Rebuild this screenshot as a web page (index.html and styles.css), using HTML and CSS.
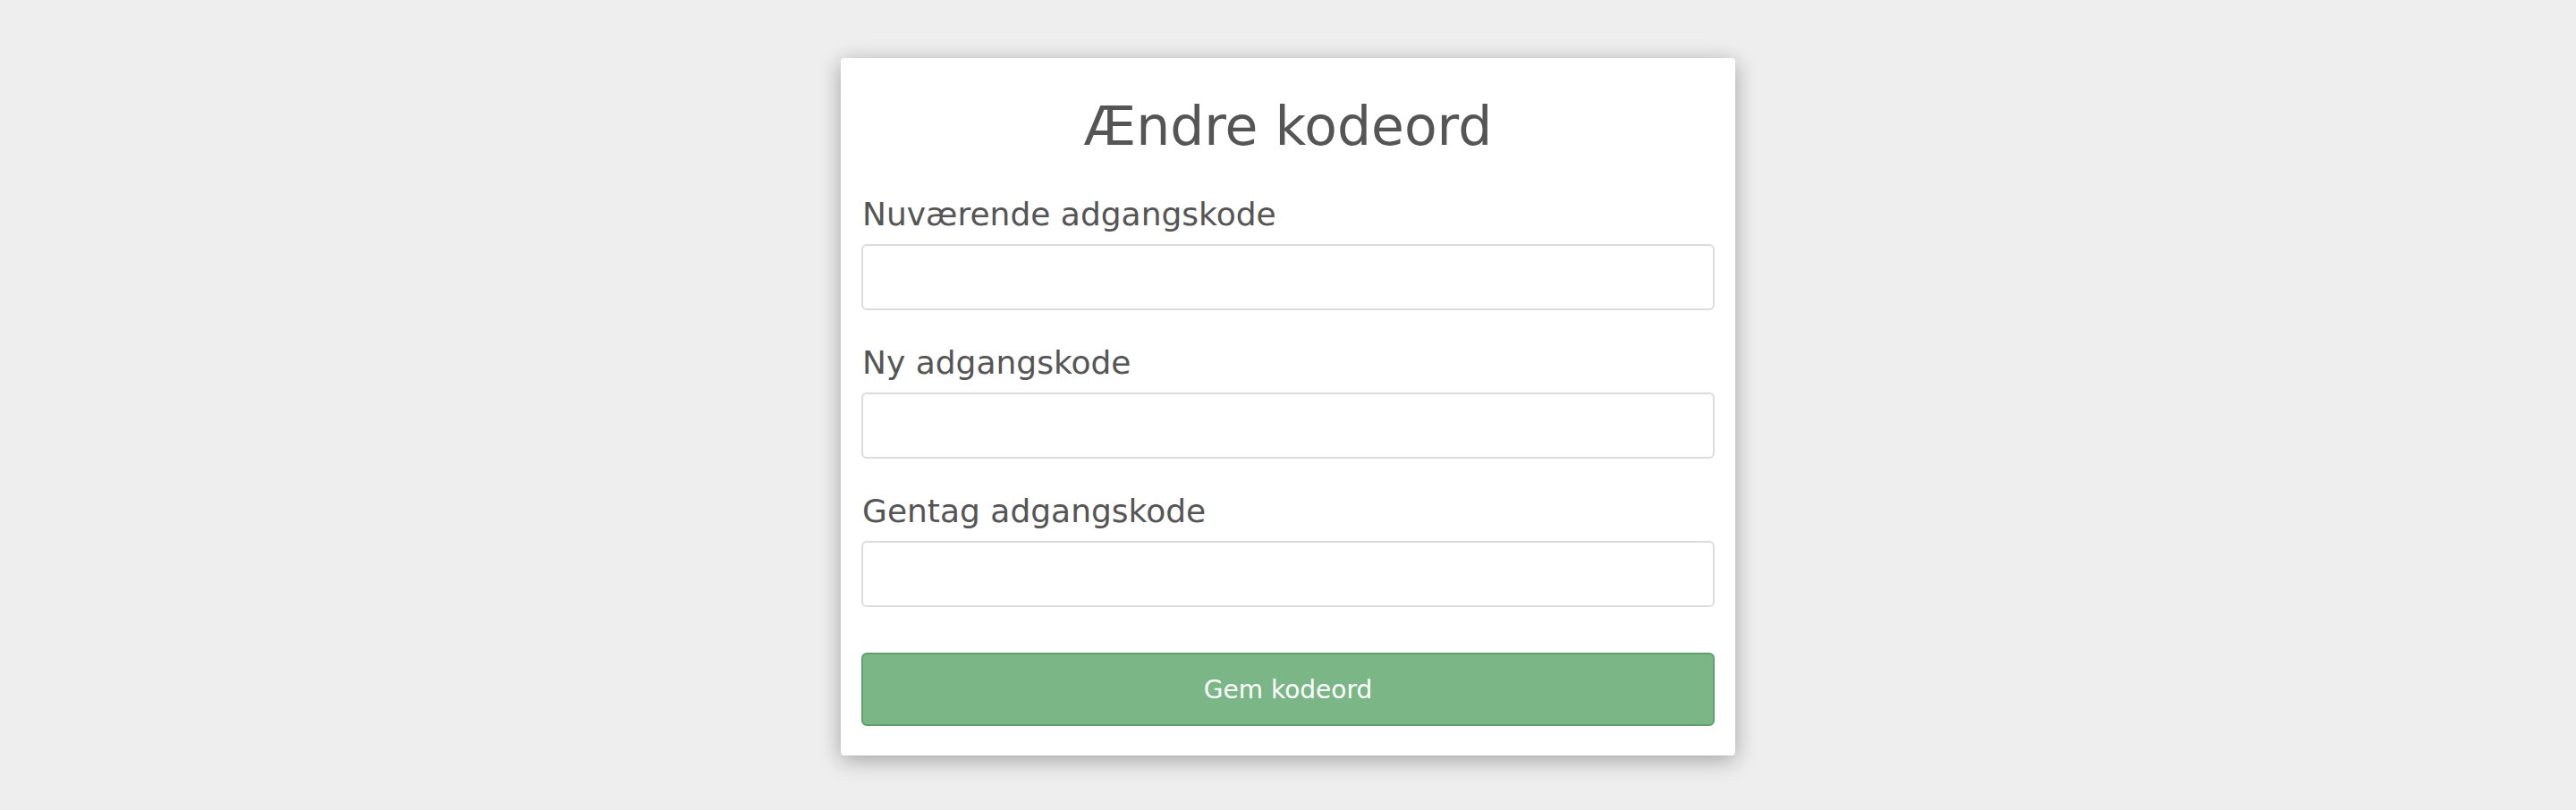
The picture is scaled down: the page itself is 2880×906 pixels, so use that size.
FILE: index.html
```html
<!DOCTYPE html>
<html lang="da">
<head>
<meta charset="utf-8">
<title>Ændre kodeord</title>
<link rel="stylesheet" href="styles.css">
</head>
<body>
<main class="page">
  <form class="card">
    <h1 class="title">Ændre kodeord</h1>
    <div class="group">
      <label class="label" for="cur">Nuværende adgangskode</label>
      <input class="input" id="cur" type="password">
    </div>
    <div class="group">
      <label class="label" for="new">Ny adgangskode</label>
      <input class="input" id="new" type="password">
    </div>
    <div class="group">
      <label class="label" for="rep">Gentag adgangskode</label>
      <input class="input" id="rep" type="password">
    </div>
    <button class="btn" type="button">Gem kodeord</button>
  </form>
</main>
</body>
</html>
```

FILE: styles.css
```css
html, body {
  margin: 0;
  padding: 0;
  background: #eeeeee;
  font-family: "DejaVu Sans", Verdana, sans-serif;
  color: #555555;
}
.page {
  display: flex;
  justify-content: center;
  padding-top: 65px;
  height: 906px;
  box-sizing: border-box;
}
.card {
  width: 1000px;
  height: 780px;
  box-sizing: border-box;
  background: #ffffff;
  border-radius: 4px;
  box-shadow: 0 5px 24px rgba(0, 0, 0, 0.32);
  padding: 43px 23px 33px 23px;
  display: flex;
  flex-direction: column;
}
.title {
  margin: 0 0 44px 0;
  font-size: 60px;
  line-height: 66px;
  font-weight: normal;
  text-align: center;
  color: #555555;
}
.group {
  display: flex;
  flex-direction: column;
  margin-bottom: 37px;
}
.group:last-of-type {
  margin-bottom: 51px;
}
.label {
  font-size: 36px;
  line-height: 43px;
  margin: 0 0 12px 0;
  padding-left: 1px;
  color: #555555;
}
.input {
  display: block;
  width: 100%;
  height: 74px;
  box-sizing: border-box;
  border: 2px solid #dcdcdc;
  border-radius: 6px;
  background: #ffffff;
  margin: 0;
  font-family: inherit;
  font-size: 28px;
}
.btn {
  display: block;
  width: 100%;
  height: 82px;
  box-sizing: border-box;
  background: #7bb686;
  border: 2px solid #629f6e;
  border-radius: 6px;
  color: #ffffff;
  font-family: "DejaVu Sans", Verdana, sans-serif;
  font-size: 28px;
  padding: 0;
  margin: 0;
}
```
